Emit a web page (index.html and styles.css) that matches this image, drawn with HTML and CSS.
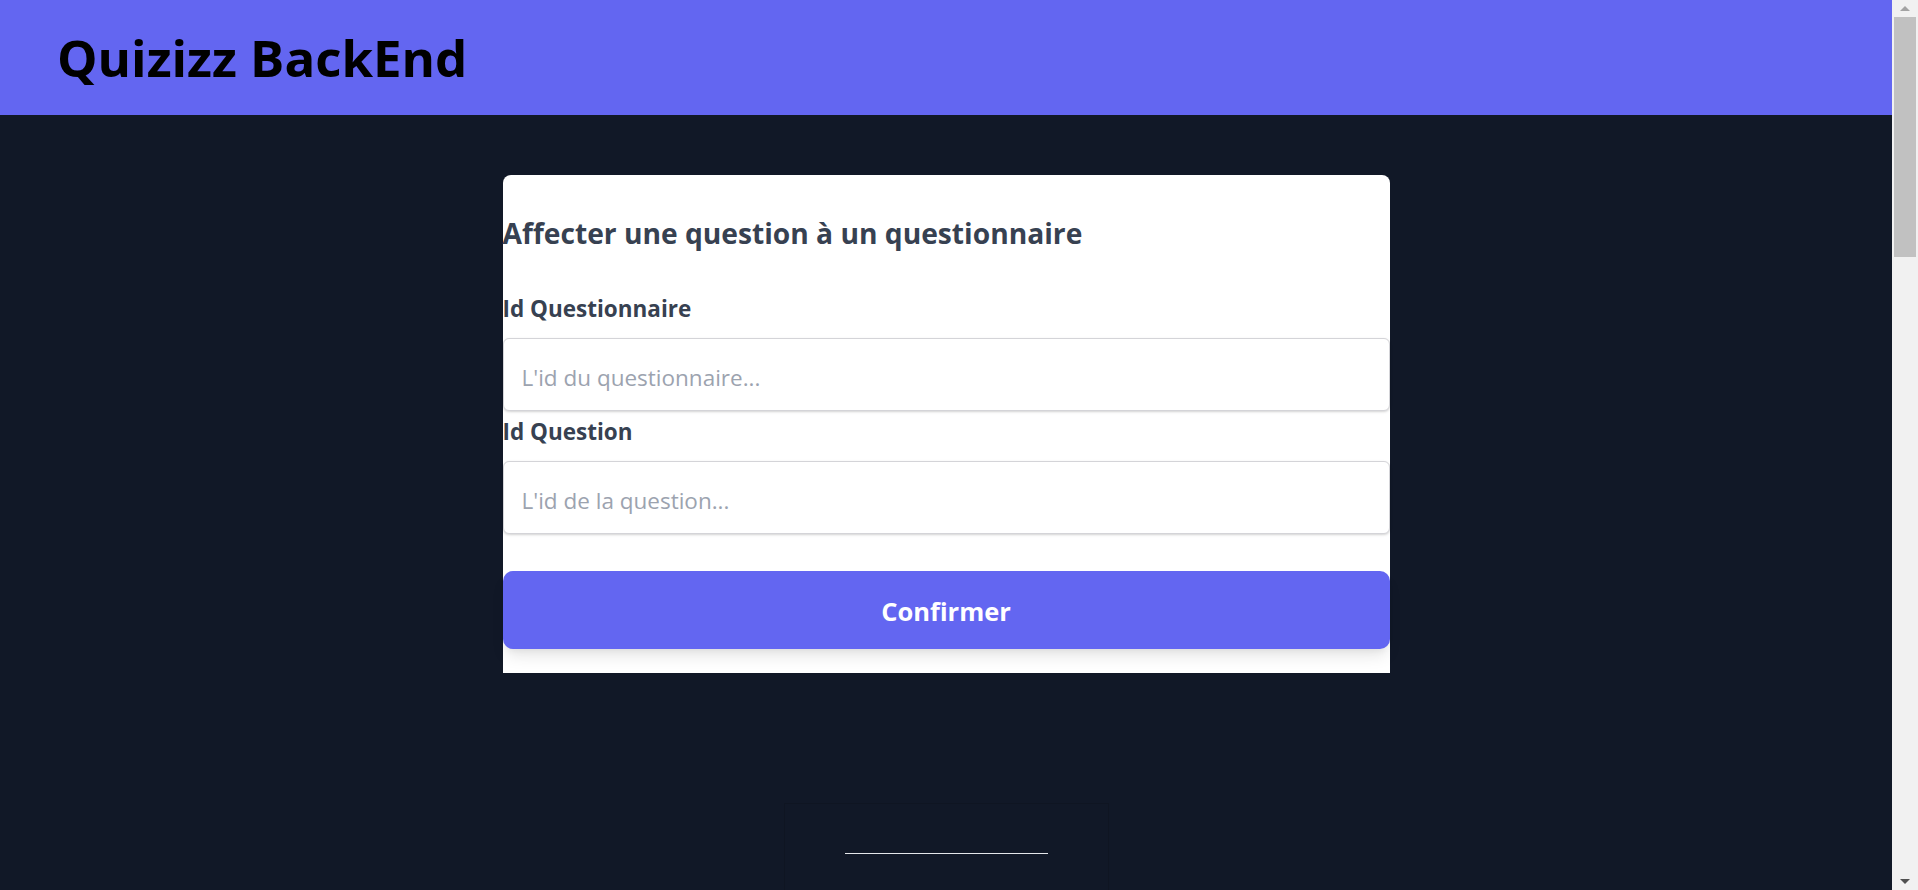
FILE: index.html
```html
<!DOCTYPE html>
<html lang="fr">
<head>
<meta charset="utf-8">
<title>Quizizz BackEnd</title>
<link rel="stylesheet" href="styles.css">
</head>
<body>
<div class="page">
  <header class="topbar">
    <h1 class="brand">Quizizz BackEnd</h1>
  </header>
  <main class="main">
    <form class="card">
      <h2 class="card-title">Affecter une question à un questionnaire</h2>
      <label class="field-label field-label-first" for="idq">Id Questionnaire</label>
      <input class="field-input" id="idq" type="text" placeholder="L'id du questionnaire...">
      <label class="field-label" for="idquest">Id Question</label>
      <input class="field-input" id="idquest" type="text" placeholder="L'id de la question...">
      <button class="submit" type="button">Confirmer</button>
    </form>
    <section class="footer-box">
      <hr class="footer-rule">
    </section>
  </main>
</div>
<aside class="scrollbar" aria-hidden="true">
  <div class="sb-arrow sb-up"></div>
  <div class="sb-track">
    <div class="sb-thumb"></div>
  </div>
  <div class="sb-arrow sb-down"></div>
</aside>
</body>
</html>
```

FILE: styles.css
```css
html, body {
  margin: 0;
  padding: 0;
}

body {
  background: #111827;
  font-family: "Open Sans", "Noto Sans", sans-serif;
  display: flex;
  align-items: flex-start;
}

.page {
  flex: 1;
  min-width: 0;
  min-height: 3115px;
  display: flex;
  flex-direction: column;
}

/* browser scrollbar */
.scrollbar {
  position: sticky;
  top: 0;
  flex: 0 0 26px;
  height: 100vh;
  background: #f1f1f1;
  display: flex;
  flex-direction: column;
}

.sb-arrow {
  height: 17px;
  display: flex;
  align-items: center;
  justify-content: center;
}

.sb-arrow::before {
  content: "";
  width: 0;
  height: 0;
  border-left: 5px solid transparent;
  border-right: 5px solid transparent;
}

.sb-up::before {
  border-bottom: 5px solid #a3a3a3;
}

.sb-down::before {
  border-top: 5px solid #505050;
}

.sb-track {
  flex: 1;
  padding: 0 2px;
}

.sb-thumb {
  height: 240px;
  background: #c1c1c1;
}

.topbar {
  height: 115px;
  background: #6366f1;
  display: flex;
  align-items: center;
  padding-left: 57px;
  box-sizing: border-box;
}

.brand {
  margin: 0;
  font-size: 51px;
  line-height: 51px;
  font-weight: 700;
  color: #000;
}

.main {
  padding-top: 60px;
  display: flex;
  flex-direction: column;
  align-items: center;
}

.card {
  width: 887px;
  box-sizing: border-box;
  background: #fff;
  border-radius: 8px 8px 0 0;
  padding: 40px 0 24px;
  display: flex;
  flex-direction: column;
}

.card-title {
  margin: 0;
  font-size: 28.2px;
  line-height: 36px;
  font-weight: 700;
  color: #374151;
}

.field-label {
  display: block;
  margin: 7px 0 15px;
  font-size: 22.5px;
  line-height: 28px;
  font-weight: 700;
  color: #374151;
}

.field-label-first {
  margin-top: 44px;
}

.field-input {
  display: block;
  height: 73px;
  box-sizing: border-box;
  margin: 0;
  padding: 5px 18px 0;
  border: 1px solid #d4d4d8;
  border-radius: 6px;
  box-shadow: 0 1px 3px rgba(0, 0, 0, 0.12), 0 1px 2px rgba(0, 0, 0, 0.06);
  font-family: inherit;
  font-size: 22.5px;
  color: #374151;
  background: #fff;
  outline: none;
}

.field-input::placeholder {
  color: #9ca3af;
}

.submit {
  margin-top: 37px;
  height: 78px;
  padding: 2px 0 0;
  border: 0;
  border-radius: 10px;
  background: #6366f1;
  color: #fff;
  font-family: inherit;
  font-size: 25.5px;
  font-weight: 700;
  box-shadow: 0 10px 15px -3px rgba(0, 0, 0, 0.1), 0 4px 6px -2px rgba(0, 0, 0, 0.05);
  cursor: pointer;
}

.footer-box {
  margin-top: 130px;
  width: 325px;
  height: 400px;
  box-sizing: border-box;
  border: 1px solid #0f1522;
  border-bottom: 0;
  padding-top: 49px;
}

.footer-rule {
  margin: 0 auto;
  width: 203px;
  height: 0;
  border: 0;
  border-top: 1px solid #e5e7eb;
}
```
